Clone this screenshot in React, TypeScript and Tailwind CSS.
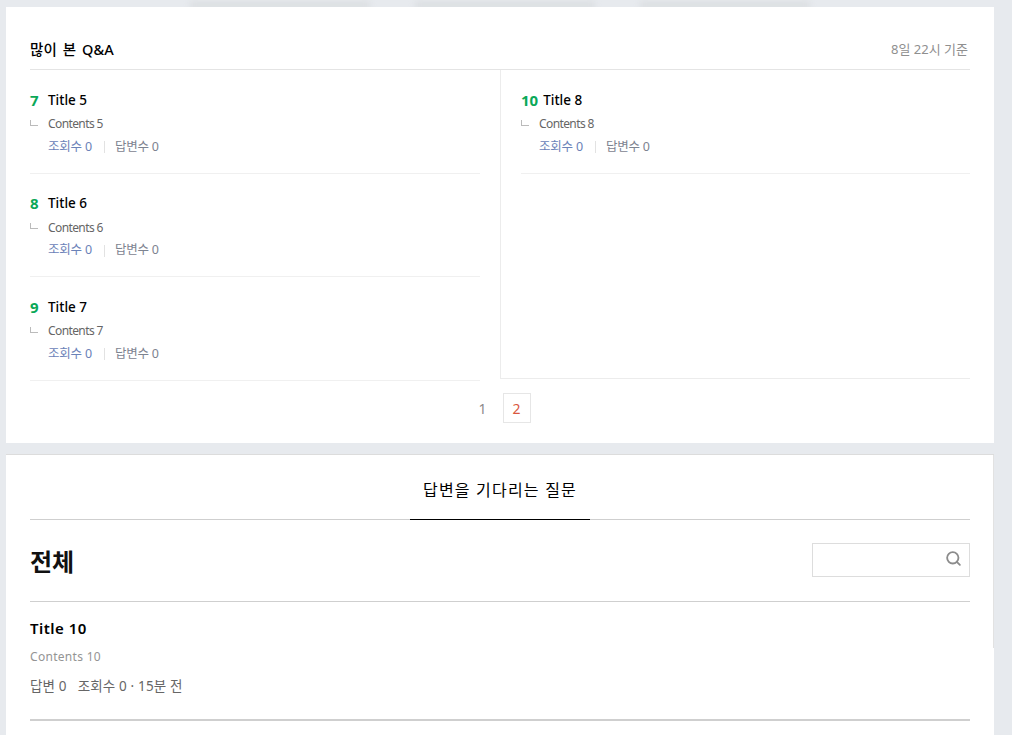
import { Search } from 'lucide-react';

const font = { fontFamily: '"Noto Sans", "Noto Sans CJK KR", sans-serif' };

interface QnaItem {
  rank: number;
  title: string;
  contents: string;
}

const leftItems: QnaItem[] = [
  { rank: 7, title: 'Title 5', contents: 'Contents 5' },
  { rank: 8, title: 'Title 6', contents: 'Contents 6' },
  { rank: 9, title: 'Title 7', contents: 'Contents 7' },
];

const QnaRow = ({ item }: { item: QnaItem }) => (
  <div className="h-[103.5px] border-b border-[#f0f0f0] pt-[19px]">
    <div className="flex h-[22px] items-center">
      <span className="mr-[5px] min-w-[13px] text-[15px] font-bold text-[#0aa858]">{item.rank}</span>
      <span className="text-[13.5px] font-medium text-black">{item.title}</span>
    </div>
    <div className="mt-[3px] flex h-[20px] items-center text-[12px] tracking-[-0.6px] text-[#666]">
      <span className="mr-[10px] mb-[3px] h-[6px] w-[8px] border-b border-l border-[#bbb]" />
      {item.contents}
    </div>
    <div className="mt-[3px] ml-[18px] flex h-[20px] items-center text-[12.5px] tracking-[-0.2px] text-[#6b82b8]">
      <span>조회수 0</span>
      <span className="mr-[10px] ml-[12px] h-[12px] w-px bg-[#e2e2e2]" />
      <span className="text-[#7d8390]">답변수 0</span>
    </div>
  </div>
);

export default function App() {
  return (
    <div className="relative h-[735px] w-[1012px] overflow-hidden bg-[#e7eaee] pt-[7px] pl-[6px]" style={font}>
      {/* smudges left over from the cards above */}
      <div className="absolute top-[2px] left-[190px] h-[6px] w-[180px] bg-[#d9dcdf] blur-[3px]" />
      <div className="absolute top-[2px] left-[415px] h-[6px] w-[180px] bg-[#d9dcdf] blur-[3px]" />
      <div className="absolute top-[2px] left-[640px] h-[6px] w-[170px] bg-[#d9dcdf] blur-[3px]" />

      <section className="relative h-[436px] w-[988px] bg-white px-[24px]">
        <div className="flex h-[63px] items-end justify-between border-b border-[#e4e4e4] pb-[8px]">
          <h2 className="text-[14.5px] font-medium tracking-[0.1px] [word-spacing:2px] text-black">많이 본 Q&amp;A</h2>
          <span className="mr-[2px] mb-[2px] text-[13px] text-[#8f8f8f]">8일 22시 기준</span>
        </div>
        <div className="flex h-[309px]">
          <div className="w-[470px]">
            <div className="w-[450px]">
              {leftItems.map((item) => (
                <QnaRow key={item.rank} item={item} />
              ))}
            </div>
          </div>
          <div className="w-[470px] border-b border-l border-[#ececec] pl-[20px]">
            <QnaRow item={{ rank: 10, title: 'Title 8', contents: 'Contents 8' }} />
          </div>
        </div>
        <div className="mt-[14px] flex items-center justify-center pr-[2px] text-[14px]">
          <span className="w-[30px] text-center text-[#8a8a8a]">1</span>
          <span className="ml-[5px] flex h-[30px] w-[28px] items-center justify-center border border-[#e6e6e6] text-[#d9573f]">
            2
          </span>
        </div>
      </section>

      <section className="relative mt-[11px] h-[301px] w-[988px] border-t border-[#dcdcdc] bg-white px-[24px]">
        <span className="absolute top-0 right-0 h-[193px] w-px bg-[#e2e2e2]" />
        <div className="relative flex h-[65px] items-start justify-center border-b border-[#cfcfcf] pt-[23px]">
          <h2 className="text-[16px] tracking-[1.2px] text-black">답변을 기다리는 질문</h2>
          <span className="absolute right-[380px] -bottom-px left-[380px] h-px bg-black" />
        </div>
        <div className="flex h-[82px] items-center justify-between border-b border-[#cfcfcf]">
          <h1 className="mt-[2px] text-[24px] font-bold text-[#111]">전체</h1>
          <div className="mb-[2px] flex h-[34px] w-[158px] items-center justify-end border border-[#dddddd] pr-[7px] pb-[2px]">
            <Search className="h-[17px] w-[17px] text-[#8c8c8c]" strokeWidth={2.6} />
          </div>
        </div>
        <div className="h-[119px] border-b-2 border-[#cfcfcf] pt-[15px]">
          <div className="text-[15px] font-semibold tracking-[0.5px] text-black">Title 10</div>
          <div className="mt-[8px] text-[12px] tracking-[0.3px] text-[#949494]">Contents 10</div>
          <div className="mt-[10px] flex text-[13.5px] tracking-[0.15px] text-[#666]">
            <span>답변 0</span>
            <span className="ml-[11px]">조회수 0 · 15분 전</span>
          </div>
        </div>
      </section>
    </div>
  );
}
